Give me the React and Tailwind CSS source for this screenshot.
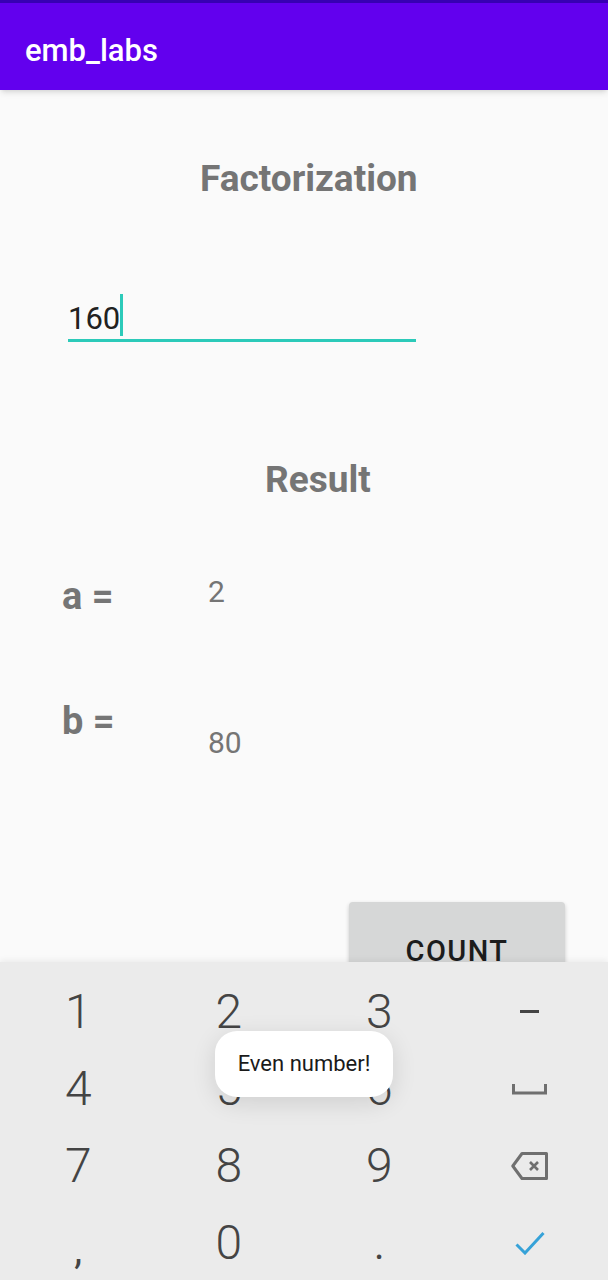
// Factorization screen with numeric soft keyboard and a toast on top.
const KEYS = [
  ["1", "2", "3", "minus"],
  ["4", "5", "6", "space"],
  ["7", "8", "9", "back"],
  ["comma", "0", "dot", "done"],
];

function KeyFace({ k }) {
  if (k === "minus") return <div className="w-[19px] h-[3px] bg-[#444]" />;
  if (k === "space")
    return (
      <svg width="35" height="12" viewBox="0 0 35 12" fill="none">
        <path d="M1.5 1 V10 H33.5 V1" stroke="#6f6f6f" strokeWidth="3" />
      </svg>
    );
  if (k === "back")
    return (
      <svg width="37" height="28" viewBox="0 0 37 28" fill="none">
        <path d="M11 1.5 H35.5 V26.5 H11 L1.8 14 Z" stroke="#6f6f6f" strokeWidth="3" strokeLinejoin="round" />
        <path d="M19 10 L27 18 M27 10 L19 18" stroke="#6f6f6f" strokeWidth="2.6" />
      </svg>
    );
  if (k === "done")
    return (
      <svg width="30" height="24" viewBox="0 0 30 24" fill="none">
        <path d="M1.5 13.5 L10 22 L28.5 2" stroke="#36a2d8" strokeWidth="3" />
      </svg>
    );
  if (k === "comma") return <span className="text-[40px] leading-none text-[#444] mt-[14px]">,</span>;
  if (k === "dot") return <span className="text-[40px] leading-none text-[#444] mt-[6px]">.</span>;
  return <span className="text-[48px] leading-none font-light text-[#444]">{k}</span>;
}

export default function App() {
  return (
    <div className="w-[608px] h-[1280px] bg-[#fafafa] relative overflow-hidden font-[Roboto,sans-serif]">
      <header className="h-[90px] bg-[#6200ee] border-t-[3px] border-[#3700b3] shadow-md relative z-10">
        <h1 className="pl-[25px] pt-[32px] text-[31px] leading-none font-medium text-white">emb_labs</h1>
      </header>

      <main className="h-[872px] overflow-hidden">
        <h2 className="mt-[70px] pl-[200px] text-[37px] leading-none font-bold text-[#757575]">Factorization</h2>

        <div className="mt-[97px] ml-[68px] w-[348px]">
          <div className="h-[45px] flex items-start">
            <span className="mt-[9px] text-[31px] leading-none text-[#212121]">160</span>
            <span className="w-[3px] h-[42px] bg-[#2ccab9]" />
          </div>
          <div className="h-[3px] bg-[#2ccab9]" />
        </div>

        <h2 className="mt-[119px] pl-[265px] text-[37px] leading-none font-bold text-[#757575]">Result</h2>

        <div className="mt-[79px] ml-[62px] flex items-start">
          <span className="w-[146px] text-[38px] leading-none font-bold text-[#757575]">a =</span>
          <span className="text-[30px] leading-none text-[#757575]">2</span>
        </div>

        <div className="mt-[87px] ml-[62px] flex items-start">
          <span className="w-[146px] text-[38px] leading-none font-bold text-[#757575]">b =</span>
          <span className="mt-[26px] text-[30px] leading-none text-[#757575]">80</span>
        </div>

        <div className="mt-[144px] ml-[349px] w-[216px] h-[98px] rounded-[4px] bg-[#d6d7d7] shadow-[0_2px_4px_rgba(0,0,0,0.2)] flex items-center justify-center">
          <span className="text-[29px] leading-none font-medium tracking-[0.05em] text-[#1c1c1c]">COUNT</span>
        </div>
      </main>

      <section className="h-[318px] bg-[#ebebeb] pt-[11px] px-[3px] shadow-[0_-2px_6px_rgba(0,0,0,0.06)] relative">
        {KEYS.map((row, i) => (
          <div key={i} className="grid grid-cols-4 h-[77px]">
            {row.map(k => (
              <div key={k} className="flex items-center justify-center">
                <KeyFace k={k} />
              </div>
            ))}
          </div>
        ))}

        <div className="absolute left-[215px] top-[69px] w-[178px] h-[66px] rounded-[22px] bg-white shadow-[0_6px_24px_rgba(0,0,0,0.12)] flex items-center justify-center">
          <span className="text-[22px] leading-none text-[#1a1a1a]">Even number!</span>
        </div>
      </section>
    </div>
  );
}
